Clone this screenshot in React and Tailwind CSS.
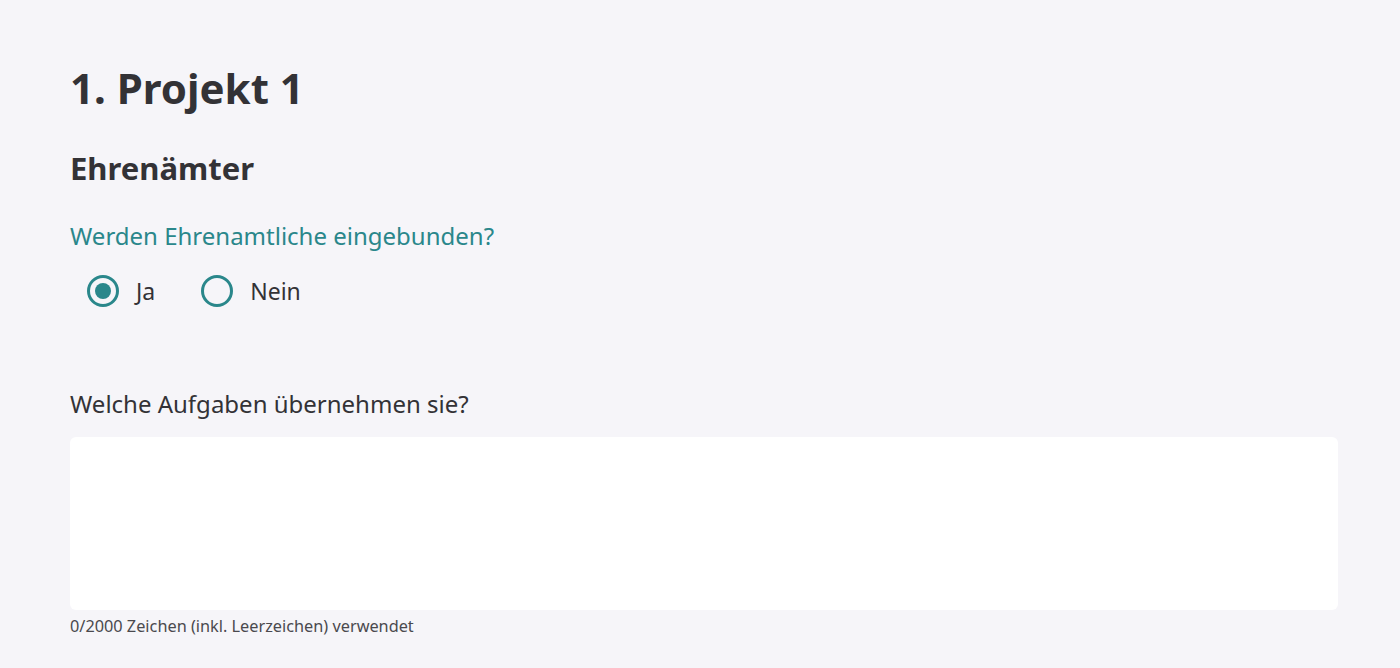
import React, { useState } from 'react';

// --- Radio option ---

function RadioOption({ label, checked, onChange }) {
  return (
    <label className="flex items-center gap-[17px] cursor-pointer">
      <span className="flex h-[32px] w-[32px] items-center justify-center rounded-full border-[3px] border-[#2a878b]">
        {checked && <span className="h-[16px] w-[16px] rounded-full bg-[#2a878b]" />}
      </span>
      <input type="radio" className="hidden" checked={checked} onChange={onChange} />
      <span className="text-[23px] text-[#333236]">{label}</span>
    </label>
  );
}

export default function App() {
  const [choice, setChoice] = useState('ja');
  const [text, setText] = useState('');

  return (
    <div className="min-h-screen w-full bg-[#f6f5f9] font-['Noto_Sans',sans-serif] text-[#333236]">
      <div className="px-[70px] pt-[56px] pr-[62px]">
        <h1 className="text-[42px] font-bold leading-[64px]">1. Projekt 1</h1>

        <h2 className="mt-[26px] text-[31px] font-bold leading-[44px]">Ehrenämter</h2>

        {/* Question */}
        <p className="mt-[30px] text-[24px] leading-[32px] text-[#2a878b]">Werden Ehrenamtliche eingebunden?</p>
        <div className="mt-[22px] flex items-center gap-[46px] pl-[17px]">
          <RadioOption label="Ja" checked={choice === 'ja'} onChange={() => setChoice('ja')} />
          <RadioOption label="Nein" checked={choice === 'nein'} onChange={() => setChoice('nein')} />
        </div>

        {/* Free text */}
        <label className="mt-[79px] block text-[24px] leading-[32px]">Welche Aufgaben übernehmen sie?</label>
        <textarea
          value={text}
          onChange={(e) => setText(e.target.value)}
          className="mt-[17px] block h-[173px] w-full resize-none rounded-[6px] bg-white p-3 outline-none"
        />
        <p className="mt-[6px] text-[16.3px] leading-[20px] text-[#4a494e]">
          {text.length}/2000 Zeichen (inkl. Leerzeichen) verwendet
        </p>
      </div>
    </div>
  );
}
